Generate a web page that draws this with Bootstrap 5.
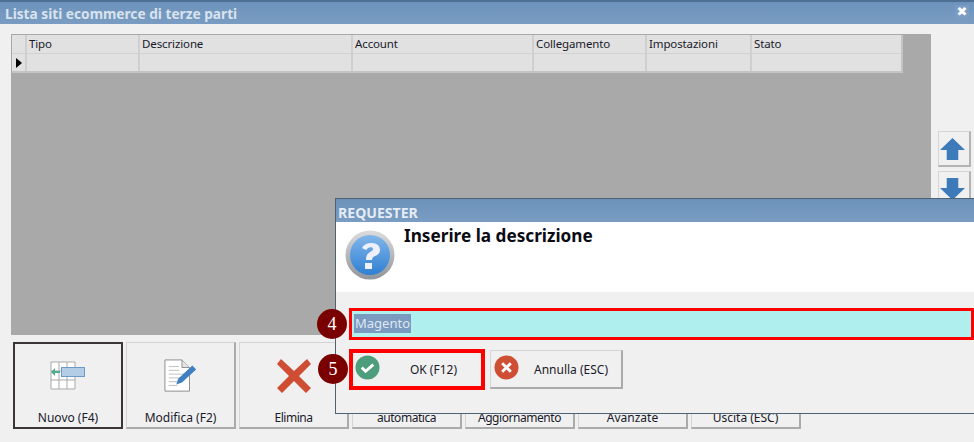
<!DOCTYPE html>
<html lang="it"><head><meta charset="utf-8"><title>Lista siti</title>
<link rel="stylesheet" href="https://cdn.jsdelivr.net/npm/bootstrap@5.3.0/dist/css/bootstrap.min.css">
<style>
html,body{margin:0;background:#f0f0f0;overflow:hidden}
body{font-family:"Noto Sans","Liberation Sans",sans-serif;font-size:12px;color:#1a1a2a}
.win{width:974px;height:442px;position:relative;background:#f0f0f0}
.wtitle{height:24px;background:linear-gradient(#6d93bc,#7a9cc2);border-top:2px solid #4d6f93;color:#d9e3ee;font:bold 13.7px/18px "Noto Sans",sans-serif;padding:3px 0 0 5px}
.wclose{width:14px;height:14px;margin-right:5px;background:#7a9cc2;color:#fff;font:bold 13px/13px "DejaVu Sans",sans-serif;text-align:center}
.mainrow{padding:10px 0 0 11px;height:311px}
.gridbox{width:920px;height:301px;background:#a9a9a9;padding:1px}
.gtable{width:890px;table-layout:fixed;border-collapse:collapse;background:#e1e1e1}
.gtable td,.gtable th{height:18.5px;font-weight:400;font-size:11.5px;letter-spacing:-.12px;line-height:16px;padding:0 0 0 2px;border-right:2px solid #cfcfcf;border-bottom:1px solid #d2d2d2;vertical-align:middle;overflow:hidden;white-space:nowrap;color:#1a1a2a}
.gtable tr+tr td{border-bottom:2px solid #c4c4c4}
.gtable th:last-child,.gtable td:last-child{border-right:2px solid #c4c4c4}
.sidecol{margin:97px 0 0 7px;gap:4px;width:33px}
.sbtn{width:33px;height:36px;padding:0 0 0 1px;background:#f0f0f0;border:1px solid #d4d4d4;border-right:2px solid #b4b4b4;border-bottom:2px solid #b4b4b4;border-radius:0}
.toolbar{padding:7px 0 0 13px;gap:3px}
.tbtn{width:110px;height:87px;padding:0 0 1px;background:#f0f0f0;border:1px solid #d4d4d4;border-right:2px solid #ababab;border-bottom:2px solid #ababab;border-radius:0;font-size:12px;color:#1a1a2a;line-height:16px;justify-content:space-between}
.tbtn.foc{border:2px solid #3b3535}
.tbtn svg{margin-top:17px}
.tbtn svg.ic2{margin-top:16px}
.tbtn svg.ic3{margin-top:15px}
.tight{letter-spacing:-.45px}
.dlg{position:absolute;left:335px;top:198px;width:640px;height:216px;background:#f0f0f0;border:1px solid #4f6274;border-right:0}
.dtitle{height:23px;background:linear-gradient(#6b92bb,#7a9cc2);color:#e4ecf5;font:bold 14.1px/18px "Noto Sans",sans-serif;padding:5px 0 0 2px}
.dwhite{height:70px;background:#fff;padding:0 0 0 9px;gap:9px}
.dq{font:bold 17.2px/20px "Noto Sans",sans-serif;color:#0b0b14;margin-top:4px}
.dwhite svg{margin-top:8px}
.inpwrap{margin:16px 0 0 13px;width:625px;height:32px;border:3px solid #f00;background:#aff0ee;padding:0 0 2px 2px;display:flex;align-items:center}
.inptxt{background:#7a9ac0;color:#dfe8f2;font-size:13px;line-height:19px;padding:0 1px}
.dbtns{margin:9px 0 0 13px;gap:5px}
.dbtn{height:41px;width:136px;padding:0;background:#f0f0f0;border-radius:0;display:flex;align-items:flex-start;font-size:12px;color:#1a1a2a;position:relative;border:4px solid #f00}
.dbtn.plain{width:133px;height:39px;margin-top:1px;border:1px solid #d4d4d4;border-right:2px solid #ababab;border-bottom:2px solid #ababab}
.dbtn svg{margin:2px 0 0 2px;flex:none}
.dbtn.plain svg{margin:4px 0 0 3px}
.dbtn span{flex:1;text-align:center;line-height:34px;padding-left:6px}
.dbtn.plain span{line-height:38px;padding:0 0 0 2px}
.callout{position:absolute;width:30px;height:30px;border-radius:50%;background:#7a0000;color:#fff;font:18px/30px "Liberation Serif",serif;text-align:center}
</style></head>
<body>
<div class="win">
  <div class="wtitle d-flex justify-content-between align-items-start"><span>Lista siti ecommerce di terze parti</span><span class="wclose">✖</span></div>
  <div class="mainrow d-flex align-items-start">
    <div class="gridbox">
      <table class="gtable">
        <colgroup><col style="width:14px"><col style="width:113px"><col style="width:213px"><col style="width:181px"><col style="width:113px"><col style="width:105px"><col style="width:151px"></colgroup>
        <tr><th></th><th>Tipo</th><th>Descrizione</th><th>Account</th><th>Collegamento</th><th>Impostazioni</th><th>Stato</th></tr>
        <tr><td><svg class="d-block" width="10" height="12" viewBox="0 0 10 12"><path d="M2 1l6 5-6 5z" fill="#000"/></svg></td><td></td><td></td><td></td><td></td><td></td><td></td></tr>
      </table>
    </div>
    <div class="sidecol d-flex flex-column">
      <button class="sbtn btn d-flex align-items-center justify-content-start"><svg width="25" height="24" viewBox="0 0 26 26" preserveAspectRatio="none"><path d="M13 1L26 14H19V25H7V14H0z" fill="#3c7ab9"/></svg></button>
      <button class="sbtn btn d-flex align-items-center justify-content-start"><svg width="25" height="24" viewBox="0 0 26 26" preserveAspectRatio="none"><path d="M13 25L26 12H19V1H7V12H0z" fill="#3c7ab9"/></svg></button>
    </div>
  </div>
  <div class="toolbar d-flex align-items-start">
    <button class="tbtn foc btn d-flex flex-column align-items-center">
      <svg width="36" height="30" viewBox="0 0 36 30"><g fill="#fff" stroke="#a9a9a9"><path d="M1 1h24v27H1z"/><path d="M9 1v27M17 1v27M1 10h24M1 19h24" fill="none"/></g><rect x="11.500" y="6.500" width="23" height="9" fill="#b4cde6" stroke="#6d9ac4"/><path d="M1 11l4-4v3h5v2H5v3z" fill="#52ad8a"/></svg>
      <span>Nuovo (F4)</span></button>
    <button class="tbtn btn d-flex flex-column align-items-center">
      <svg class="ic2" width="34" height="34" viewBox="0 0 36 36"><path d="M1 1h18l8 8v25H1z" fill="#fff" stroke="#8a8a8a"/><path d="M19 1v8h8" fill="#e4e4e4" stroke="#8a8a8a"/><path d="M5 8h11M5 12h11M5 16h17M5 20h14M5 24h11M5 28h9" stroke="#bdbdbd"/><path d="M13 27l2-6L30 7l4 4-15 14z" fill="#3f7fc2"/></svg>
      <span>Modifica (F2)</span></button>
    <button class="tbtn btn d-flex flex-column align-items-center">
      <svg class="ic3" width="36" height="36" viewBox="0 0 36 36"><path d="M5 1l13 12L31 1l4 5-12 12 12 12-5 5-12-12L6 35l-5-5 12-12L1 6z" fill="#cf4e33"/></svg>
      <span class="tight">Elimina</span></button>
    <button class="tbtn btn d-flex flex-column align-items-center justify-content-end"><span class="tight">automatica</span></button>
    <button class="tbtn btn d-flex flex-column align-items-center justify-content-end"><span class="tight">Aggiornamento</span></button>
    <button class="tbtn btn d-flex flex-column align-items-center justify-content-end"><span>Avanzate</span></button>
    <button class="tbtn btn d-flex flex-column align-items-center justify-content-end"><span>Uscita (ESC)</span></button>
  </div>

  <div class="dlg">
    <div class="dtitle">REQUESTER</div>
    <div class="dwhite d-flex align-items-start">
      <svg width="50" height="50" viewBox="0 0 50 50"><defs><linearGradient id="rim" x1="0" y1="0" x2="0" y2="1"><stop offset="0" stop-color="#dcdcdc"/><stop offset="1" stop-color="#8f959b"/></linearGradient><linearGradient id="ball" x1="0" y1="0" x2="0" y2="1"><stop offset="0" stop-color="#82b6ea"/><stop offset="1" stop-color="#2f7fd2"/></linearGradient></defs><circle cx="25" cy="25" r="24.5" fill="url(#rim)"/><circle cx="25" cy="25" r="20" fill="url(#ball)"/><path d="M17 18c2-4 6-5 10-5 5 0 8 3 8 7 0 3-2 5-5 6-2 1-3 2-3 4h-6c0-4 1-6 4-8 2-1 3-2 3-3 0-2-3-2-5-1l-2 2zM20 33h7v6h-7z" fill="#eef0fb"/></svg>
      <div class="dq">Inserire la descrizione</div>
    </div>
    <div class="inpwrap"><span class="inptxt">Magento</span></div>
    <div class="dbtns d-flex align-items-start">
      <button class="dbtn btn"><svg width="25" height="25" viewBox="0 0 26 26"><circle cx="13" cy="13" r="12.5" fill="#4e9d7c"/><path d="M7 13l4 4L19 10" fill="none" stroke="#fff" stroke-width="3"/></svg><span>OK (F12)</span></button>
      <button class="dbtn plain btn"><svg width="25" height="25" viewBox="0 0 26 26"><circle cx="13" cy="13" r="12.5" fill="#cf4f35"/><path d="M8.500 8.500l9 9M17.500 8.500l-9 9" fill="none" stroke="#fff" stroke-width="3"/></svg><span>Annulla (ESC)</span></button>
    </div>
  </div>
  <div class="callout" style="left:317px;top:309px">4</div>
  <div class="callout" style="left:318px;top:354px">5</div>
</div>
<script src="https://cdn.jsdelivr.net/npm/bootstrap@5.3.0/dist/js/bootstrap.bundle.min.js"></script>
</body></html>
